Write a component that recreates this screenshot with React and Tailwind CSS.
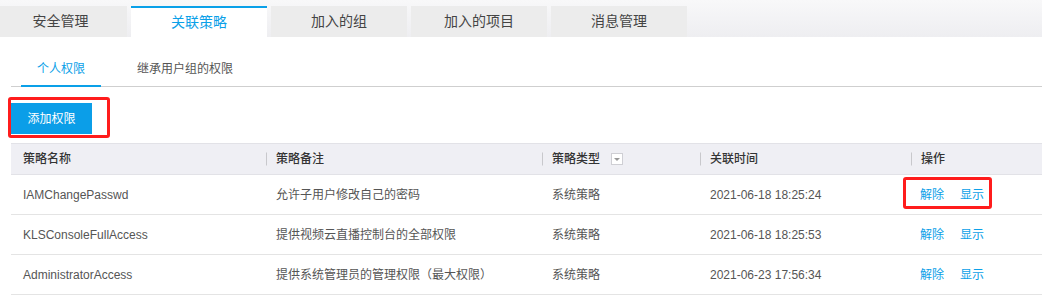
import React from "react";

const font = { fontFamily: '"Liberation Sans", "Noto Sans CJK SC", sans-serif' };

const rows = [
  ["IAMChangePasswd", "允许子用户修改自己的密码", "系统策略", "2021-06-18 18:25:24"],
  ["KLSConsoleFullAccess", "提供视频云直播控制台的全部权限", "系统策略", "2021-06-18 18:25:53"],
  ["AdministratorAccess", "提供系统管理员的管理权限（最大权限）", "系统策略", "2021-06-23 17:56:34"],
];

const cols = "grid grid-cols-[255px_276px_158px_211px_1fr]";

function Sep() {
  return <span className="absolute left-0 top-1/2 -translate-y-1/2 w-px h-[13px] bg-[#c8c8cc]" />;
}

export default function App() {
  return (
    <div className="w-[1042px] h-[306px] bg-white overflow-hidden" style={font}>
      {/* top tabs */}
      <div className="h-[37px] flex items-end gap-[4px] bg-gradient-to-b from-[#f8f8f9] to-[#eeeef1]">
        <div className="w-[127px] h-[31px] bg-[#ececec] flex items-center justify-center pr-[6px] text-[14px] text-[#444]">安全管理</div>
        <div className="w-[136px] h-[31px] bg-white border-t-2 border-[#0aa0e8] flex items-center justify-center text-[14px] text-[#0aa0e8]">关联策略</div>
        <div className="w-[136px] h-[31px] bg-[#ececec] flex items-center justify-center text-[14px] text-[#444]">加入的组</div>
        <div className="w-[136px] h-[31px] bg-[#ececec] flex items-center justify-center text-[14px] text-[#444]">加入的项目</div>
        <div className="w-[136px] h-[31px] bg-[#ececec] flex items-center justify-center text-[14px] text-[#444]">消息管理</div>
      </div>

      {/* sub tabs */}
      <div className="ml-[11px] flex gap-[20px] border-b border-[#cfcfcf] pl-[10px]">
        <div className="-mb-px pt-[24px] pb-[8px] px-4 leading-4 text-[12px] text-[#0aa0e8] border-b-2 border-[#0aa0e8]">个人权限</div>
        <div className="-mb-px pt-[24px] pb-[8px] px-4 leading-4 text-[12px] text-[#555] border-b-2 border-transparent">继承用户组的权限</div>
      </div>

      {/* button */}
      <div className="pl-[11px] mt-[16px]">
        <div className="relative w-[81px] h-[31px]">
          <button className="w-[81px] h-[31px] bg-[#0b9ee8] text-white text-[12px] flex items-center justify-center">添加权限</button>
          <div className="absolute left-[-3px] top-[-6px] w-[102px] h-[41px] border-[3px] border-[#ff1c1c] rounded-[3px]" />
        </div>
      </div>

      {/* table */}
      <div className="ml-[11px] mt-[9px]">
        <div className={`${cols} h-[32px] bg-[#efeff4] border-t border-[#e2e2e7] border-b border-[#e2e2e7] text-[12px] text-[#333] font-medium`}>
          <div className="flex items-center pl-3">策略名称</div>
          <div className="relative flex items-center pl-[10px]"><Sep />策略备注</div>
          <div className="relative flex items-center pl-[10px]">
            <Sep />策略类型
            <span className="ml-[11px] w-[12px] h-[12px] border border-[#cfcfd4] bg-white flex items-center justify-center">
              <span className="w-0 h-0 border-l-[3px] border-r-[3px] border-t-[3px] border-l-transparent border-r-transparent border-t-[#999]" />
            </span>
          </div>
          <div className="relative flex items-center pl-[10px]"><Sep />关联时间</div>
          <div className="relative flex items-center pl-[10px]"><Sep />操作</div>
        </div>
        {rows.map((r, i) => (
          <div key={i} className={`${cols} h-[40px] border-b border-[#e4e4e4] text-[12px] text-[#555]`}>
            <div className="flex items-center pl-3">{r[0]}</div>
            <div className="flex items-center pl-[10px]">{r[1]}</div>
            <div className="flex items-center pl-[10px]">{r[2]}</div>
            <div className="flex items-center pl-[10px]">{r[3]}</div>
            <div className="relative flex items-center pl-[9px] gap-[16px] text-[#0aa0e8]">
              <span>解除</span>
              <span>显示</span>
              {i === 0 && (
                <div className="absolute left-[-8px] top-[2px] w-[89px] h-[32px] border-[3px] border-[#ff1c1c] rounded-[3px]" />
              )}
            </div>
          </div>
        ))}
      </div>
    </div>
  );
}
